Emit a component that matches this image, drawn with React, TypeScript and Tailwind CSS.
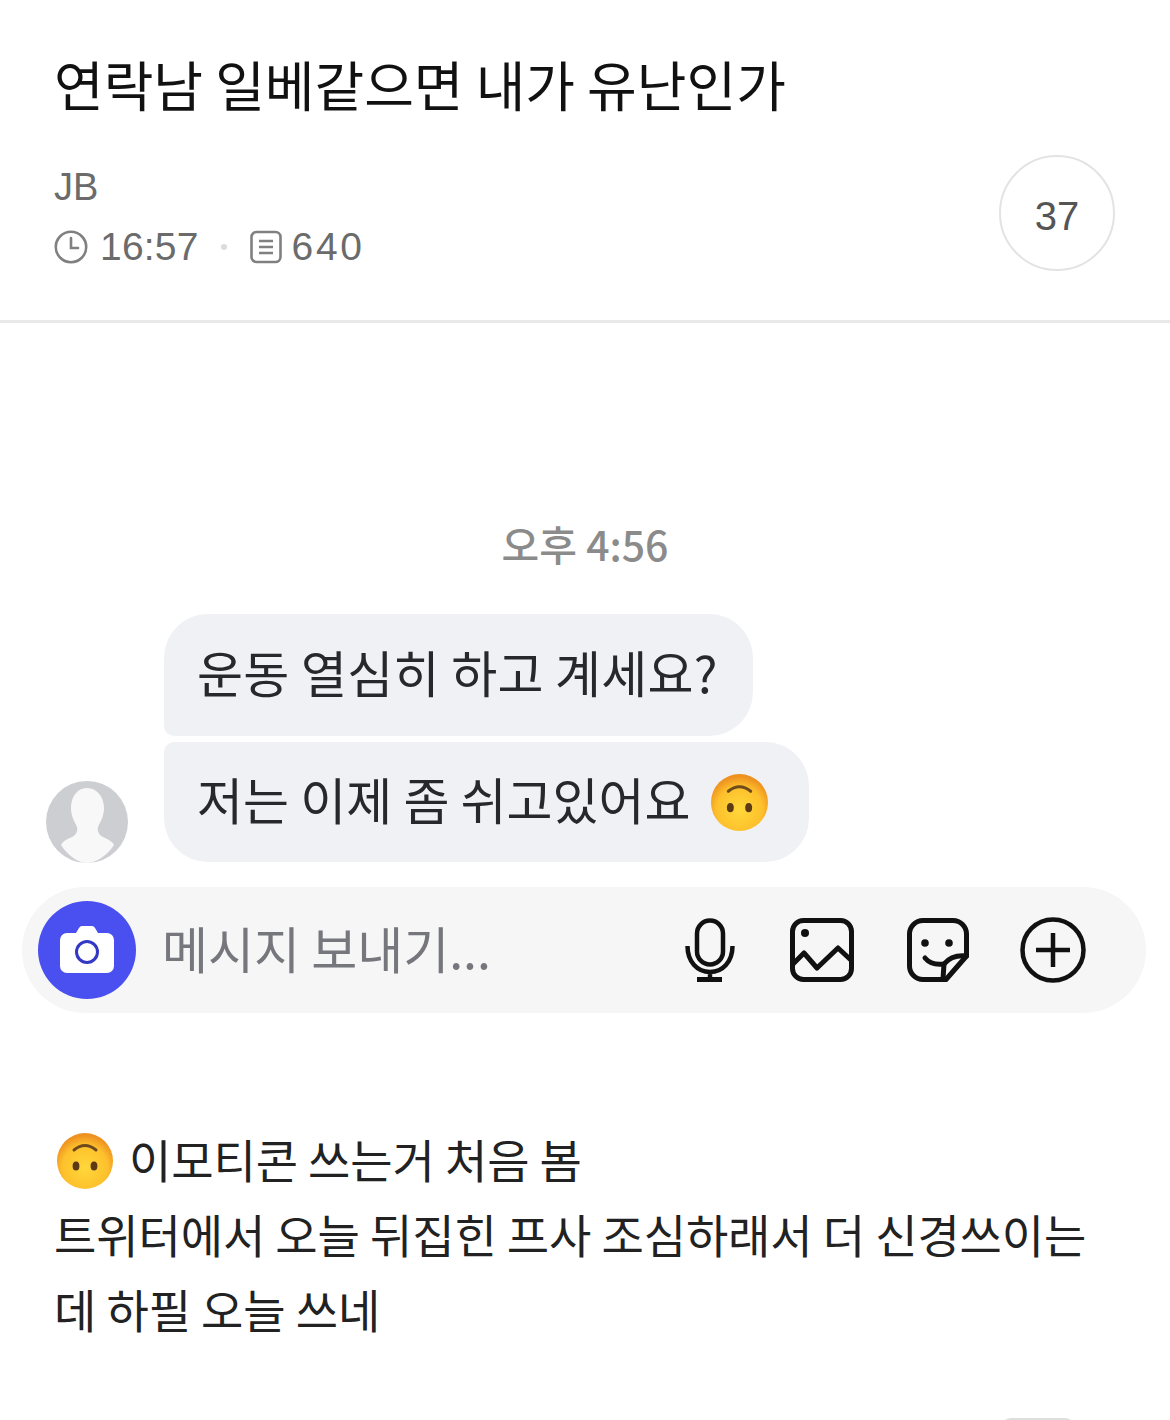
const kr = "font-['Noto_Sans_CJK_KR','Noto_Sans',sans-serif]";

function UpsideDownFace({ id, size, className }: { id: string; size: number; className?: string }) {
  return (
    <svg width={size} height={size} viewBox="0 0 56 56" className={`shrink-0 ${className ?? ""}`}>
      <defs>
        <radialGradient id={id} cx="50%" cy="62%" r="58%">
          <stop offset="0%" stopColor="#ffd83a" />
          <stop offset="70%" stopColor="#fdc02c" />
          <stop offset="100%" stopColor="#ee9120" />
        </radialGradient>
      </defs>
      <circle cx="28" cy="28" r="28" fill={`url(#${id})`} />
      <path d="M17 17 Q28 8 39 17" fill="none" stroke="#6e4a1c" strokeWidth="3" strokeLinecap="round" />
      <ellipse cx="19" cy="33" rx="3.4" ry="4.6" fill="#5c3a14" />
      <ellipse cx="37" cy="33" rx="3.4" ry="4.6" fill="#5c3a14" />
    </svg>
  );
}

function Avatar() {
  return (
    <svg width="84" height="84" viewBox="0 0 84 84" className="shrink-0">
      <circle cx="42" cy="42" r="41" fill="#cdced2" />
      <path
        d="M42 8c-10 0-16 9-16 20 0 9 4 14 6 19 1 4-1 8-5 10-5 2-9 4-11 8 7 11 18 18 26 18s20-7 27-18c-2-4-7-6-11-8-4-2-6-6-5-10 2-5 6-10 6-19 0-11-7-20-17-20z"
        fill="#f8f8f9"
      />
    </svg>
  );
}

export default function App() {
  return (
    <div className={`${kr} h-[1420px] w-[1170px] overflow-hidden bg-white`}>
      <header className="h-[323px] border-b-[3px] border-[#e9e9e9] px-[54px] pt-[48px]">
        <h1 className="whitespace-nowrap text-[54px] font-normal leading-[72px] text-[#111]">
          연락남 일베같으면 내가 유난인가
        </h1>
        <div className="mt-[45px] flex items-start justify-between">
          <div>
            <div className="font-['Liberation_Sans',sans-serif] text-[38px] leading-[44px] text-[#6b6b6b]">JB</div>
            <div className="mt-[16px] flex items-center font-['Liberation_Sans',sans-serif] text-[39px] leading-[44px] tracking-[0.2px] text-[#6b6b6b]">
              <svg width="34" height="34" viewBox="0 0 34 34" fill="none" stroke="#808080" strokeWidth="2.6">
                <circle cx="17" cy="17" r="15.2" />
                <path d="M17 8v10h7" strokeLinecap="round" />
              </svg>
              <span className="ml-[12px]">16:57</span>
              <span className="ml-[22px] h-[6px] w-[6px] rounded-full bg-[#dcdcdc]" />
              <svg className="ml-[23px]" width="32" height="34" viewBox="0 0 32 34" fill="none" stroke="#808080" strokeWidth="2.6">
                <rect x="1.5" y="2" width="29" height="30" rx="5" />
                <path d="M9 11h14M9 17h14M9 23h14" />
              </svg>
              <span className="ml-[10px] tracking-[2.6px]">640</span>
            </div>
          </div>
          <div className="-mt-[10px] mr-[1px] flex h-[116px] w-[116px] items-center justify-center rounded-full border-2 border-[#e3e3e3] pt-[6px] font-['Liberation_Sans',sans-serif] text-[40px] text-[#555]">
            37
          </div>
        </div>
      </header>

      <div className="pt-[192px] text-center text-[41px] font-medium leading-[56px] text-[#8b8b8b]">오후 4:56</div>

      <div className="mt-[43px] flex flex-col items-start gap-[6px] pl-[164px]">
        <div className="flex h-[122px] items-center rounded-[44px] rounded-bl-[10px] bg-[#f0f1f5] pb-[8px] pl-[33px] pr-[35px] text-[50px] tracking-[0.25px] text-[#26282c]">
          운동 열심히 하고 계세요?
        </div>
        <div className="relative flex h-[120px] items-center gap-[20px] rounded-[44px] rounded-tl-[10px] bg-[#f0f1f5] pl-[33px] pr-[41px] text-[50px] text-[#26282c]">
          <span className="pb-[8px]">저는 이제 좀 쉬고있어요</span>
          <UpsideDownFace id="faceA" size={57} />
          <div className="absolute -left-[119px] -bottom-[2px]">
            <Avatar />
          </div>
        </div>
      </div>

      <div className="ml-[22px] mt-[25px] flex h-[126px] w-[1124px] items-center rounded-[63px] bg-[#f6f6f6] pl-[16px]">
        <div className="flex h-[98px] w-[98px] items-center justify-center rounded-full bg-[#4a50f0]">
          <svg width="56" height="50" viewBox="0 0 56 50">
            <path d="M8 8h9l3-5a4 4 0 0 1 3-2h10a4 4 0 0 1 3 2l3 5h9a7 7 0 0 1 7 7v26a7 7 0 0 1-7 7H8a7 7 0 0 1-7-7V15a7 7 0 0 1 7-7z" fill="#fff" />
            <circle cx="28" cy="27" r="10.5" fill="none" stroke="#3439c4" strokeWidth="3" />
          </svg>
        </div>
        <div className="ml-[26px] w-[523px] pb-[6px] text-[50px] text-[#75777c]">메시지 보내기...</div>
        <svg width="50" height="64" viewBox="0 0 50 64" fill="none" stroke="#111" strokeWidth="4.5">
          <rect x="12" y="2.500" width="26" height="44" rx="13" />
          <path d="M2.500 28c0 16 10 26 22.500 26s22.500-10 22.500-26M25 54v7" />
          <path d="M12 61.500h25" strokeWidth="5" />
        </svg>
        <svg className="ml-[55px]" width="64" height="64" viewBox="0 0 64 64" fill="none" stroke="#111" strokeWidth="5" strokeLinejoin="round">
          <rect x="2.500" y="2.500" width="59" height="59" rx="11" />
          <circle cx="15" cy="15" r="4" fill="#111" stroke="none" />
          <path d="M3 46l11-11 13 15 21-20 14 13" />
        </svg>
        <svg className="ml-[53px]" width="62" height="64" viewBox="0 0 62 64" fill="none" stroke="#111" strokeWidth="5" strokeLinejoin="round" strokeLinecap="round">
          <path d="M39 61.500H16A13.500 13.500 0 0 1 2.500 48V16A13.500 13.500 0 0 1 16 2.500h30A13.500 13.500 0 0 1 59.500 16v22z" />
          <path d="M59.500 38C50 37 42 40 37 46l-1 15" />
          <path d="M18 40c5 6 12 7 19 6" />
          <circle cx="18" cy="25" r="3.800" fill="#111" stroke="none" />
          <circle cx="42" cy="25" r="3.800" fill="#111" stroke="none" />
        </svg>
        <svg className="ml-[51px]" width="66" height="66" viewBox="0 0 66 66" fill="none" stroke="#111" strokeWidth="4.5">
          <circle cx="33" cy="33" r="30.500" />
          <path d="M16 33h34M33 16v34" />
        </svg>
      </div>

      <div className="mt-[108px] px-[54px] text-[46px] leading-[75px] tracking-[-0.1px] text-[#222]">
        <div className="flex items-center gap-[16px]">
          <UpsideDownFace id="faceB" size={56} className="ml-[3px] mt-[4px]" />
          이모티콘 쓰는거 처음 봄
        </div>
        <div className="whitespace-nowrap">트위터에서 오늘 뒤집힌 프사 조심하래서 더 신경쓰이는</div>
        <div>데 하필 오늘 쓰네</div>
      </div>

      <div className="ml-[998px] mt-[72px] h-[78px] w-[80px] rounded-[14px] border-2 border-[#dedede]" />
    </div>
  );
}
